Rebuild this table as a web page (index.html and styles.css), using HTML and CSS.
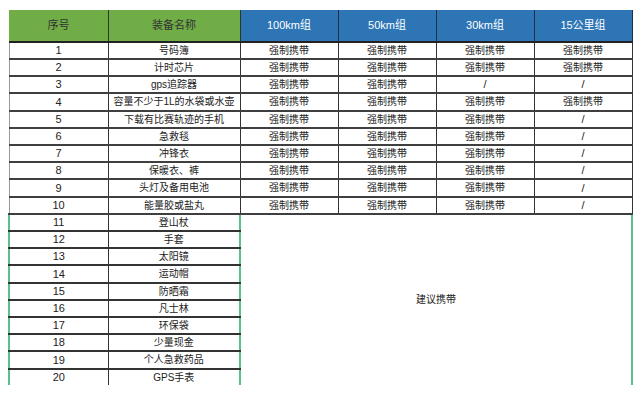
FILE: index.html
```html
<!DOCTYPE html>
<html lang="zh">
<head>
<meta charset="utf-8">
<link rel="stylesheet" href="styles.css">
</head>
<body>
<table class="sheet">
  <colgroup>
    <col class="w-no"><col class="w-name"><col class="w-g"><col class="w-g"><col class="w-g"><col class="w-g">
  </colgroup>
  <thead>
    <tr class="head">
      <th class="g">序号</th>
      <th class="g">装备名称</th>
      <th class="b">100km组</th>
      <th class="b">50km组</th>
      <th class="b">30km组</th>
      <th class="b">15公里组</th>
    </tr>
  </thead>
  <tbody>
    <tr><td>1</td><td class="zh">号码簿</td><td class="zh">强制携带</td><td class="zh">强制携带</td><td class="zh">强制携带</td><td class="zh">强制携带</td></tr>
    <tr><td>2</td><td class="zh">计时芯片</td><td class="zh">强制携带</td><td class="zh">强制携带</td><td class="zh">强制携带</td><td class="zh">强制携带</td></tr>
    <tr><td>3</td><td class="zh">gps追踪器</td><td class="zh">强制携带</td><td class="zh">强制携带</td><td>/</td><td>/</td></tr>
    <tr class="tall"><td>4</td><td class="zh">容量不少于1L的水袋或水壶</td><td class="zh">强制携带</td><td class="zh">强制携带</td><td class="zh">强制携带</td><td class="zh">强制携带</td></tr>
    <tr><td>5</td><td class="zh">下载有比赛轨迹的手机</td><td class="zh">强制携带</td><td class="zh">强制携带</td><td class="zh">强制携带</td><td>/</td></tr>
    <tr><td>6</td><td class="zh">急救毯</td><td class="zh">强制携带</td><td class="zh">强制携带</td><td class="zh">强制携带</td><td>/</td></tr>
    <tr><td>7</td><td class="zh">冲锋衣</td><td class="zh">强制携带</td><td class="zh">强制携带</td><td class="zh">强制携带</td><td>/</td></tr>
    <tr><td>8</td><td class="zh">保暖衣、裤</td><td class="zh">强制携带</td><td class="zh">强制携带</td><td class="zh">强制携带</td><td>/</td></tr>
    <tr class="tall"><td>9</td><td class="zh">头灯及备用电池</td><td class="zh">强制携带</td><td class="zh">强制携带</td><td class="zh">强制携带</td><td>/</td></tr>
    <tr><td>10</td><td class="zh">能量胶或盐丸</td><td class="zh">强制携带</td><td class="zh">强制携带</td><td class="zh">强制携带</td><td>/</td></tr>
    <tr class="sec-top"><td class="sl">11</td><td class="zh sr">登山杖</td><td class="zh merged" colspan="4" rowspan="10">建议携带</td></tr>
    <tr><td class="sl">12</td><td class="zh sr">手套</td></tr>
    <tr><td class="sl">13</td><td class="zh sr">太阳镜</td></tr>
    <tr class="tall"><td class="sl">14</td><td class="zh sr">运动帽</td></tr>
    <tr><td class="sl">15</td><td class="zh sr">防晒霜</td></tr>
    <tr><td class="sl">16</td><td class="zh sr">凡士林</td></tr>
    <tr><td class="sl">17</td><td class="zh sr">环保袋</td></tr>
    <tr><td class="sl">18</td><td class="zh sr">少量现金</td></tr>
    <tr class="tall"><td class="sl">19</td><td class="zh sr">个人急救药品</td></tr>
    <tr class="last"><td class="sl">20</td><td class="zh sr">GPS手表</td></tr>
  </tbody>
</table>
</body>
</html>
```
FILE: styles.css
```css
html, body {
  margin: 0;
  background: #ffffff;
}
body {
  padding: 10px 0 0 8px;
  font-family: "Liberation Sans Narrow", "Liberation Sans", "Noto Sans CJK SC", sans-serif;
  font-size: 11px;
  color: #222222;
}
.sheet {
  border-collapse: collapse;
  table-layout: fixed;
  width: 624px;
}
.w-no { width: 99px; }
.w-name { width: 132px; }
.w-g { width: 98px; }
th, td {
  padding: 0;
  text-align: center;
  vertical-align: middle;
  white-space: nowrap;
  line-height: 1;
  height: 15px;
  border-right: 1px solid #333333;
  border-bottom: 2px solid #3f3f3f;
  font-weight: normal;
}
tr.tall td {
  height: 16px;
}
td:first-child {
  border-left: 1px solid #9a9a9a;
}
.zh {
  font-size: 10px;
}
.head th {
  height: 31px;
  font-size: 11px;
  border-bottom: 2px solid #222222;
}
.head th.g {
  background: #70ad47;
  color: #333333;
  border-right: 1px solid #2a3a22;
}
.head th.b {
  background: #2e75b6;
  color: #ffffff;
  border-right: 1px solid #1f2f45;
}
.head th:first-child {
  border-left: 1px solid #70ad47;
}
.sec-top td {
  border-top: 2px solid #5cc08a;
}
td.sl {
  border-left: 2px solid #5cc08a;
  border-bottom: 2px solid #333333;
}
td.sr {
  border-right: 2px solid #5cc08a;
  border-bottom: 2px solid #333333;
}
td.merged {
  border-top: 2px solid #5cc08a;
  border-right: 2px solid #5cc08a;
  border-bottom: none;
}
tr.last td {
  border-bottom: none;
}
```
